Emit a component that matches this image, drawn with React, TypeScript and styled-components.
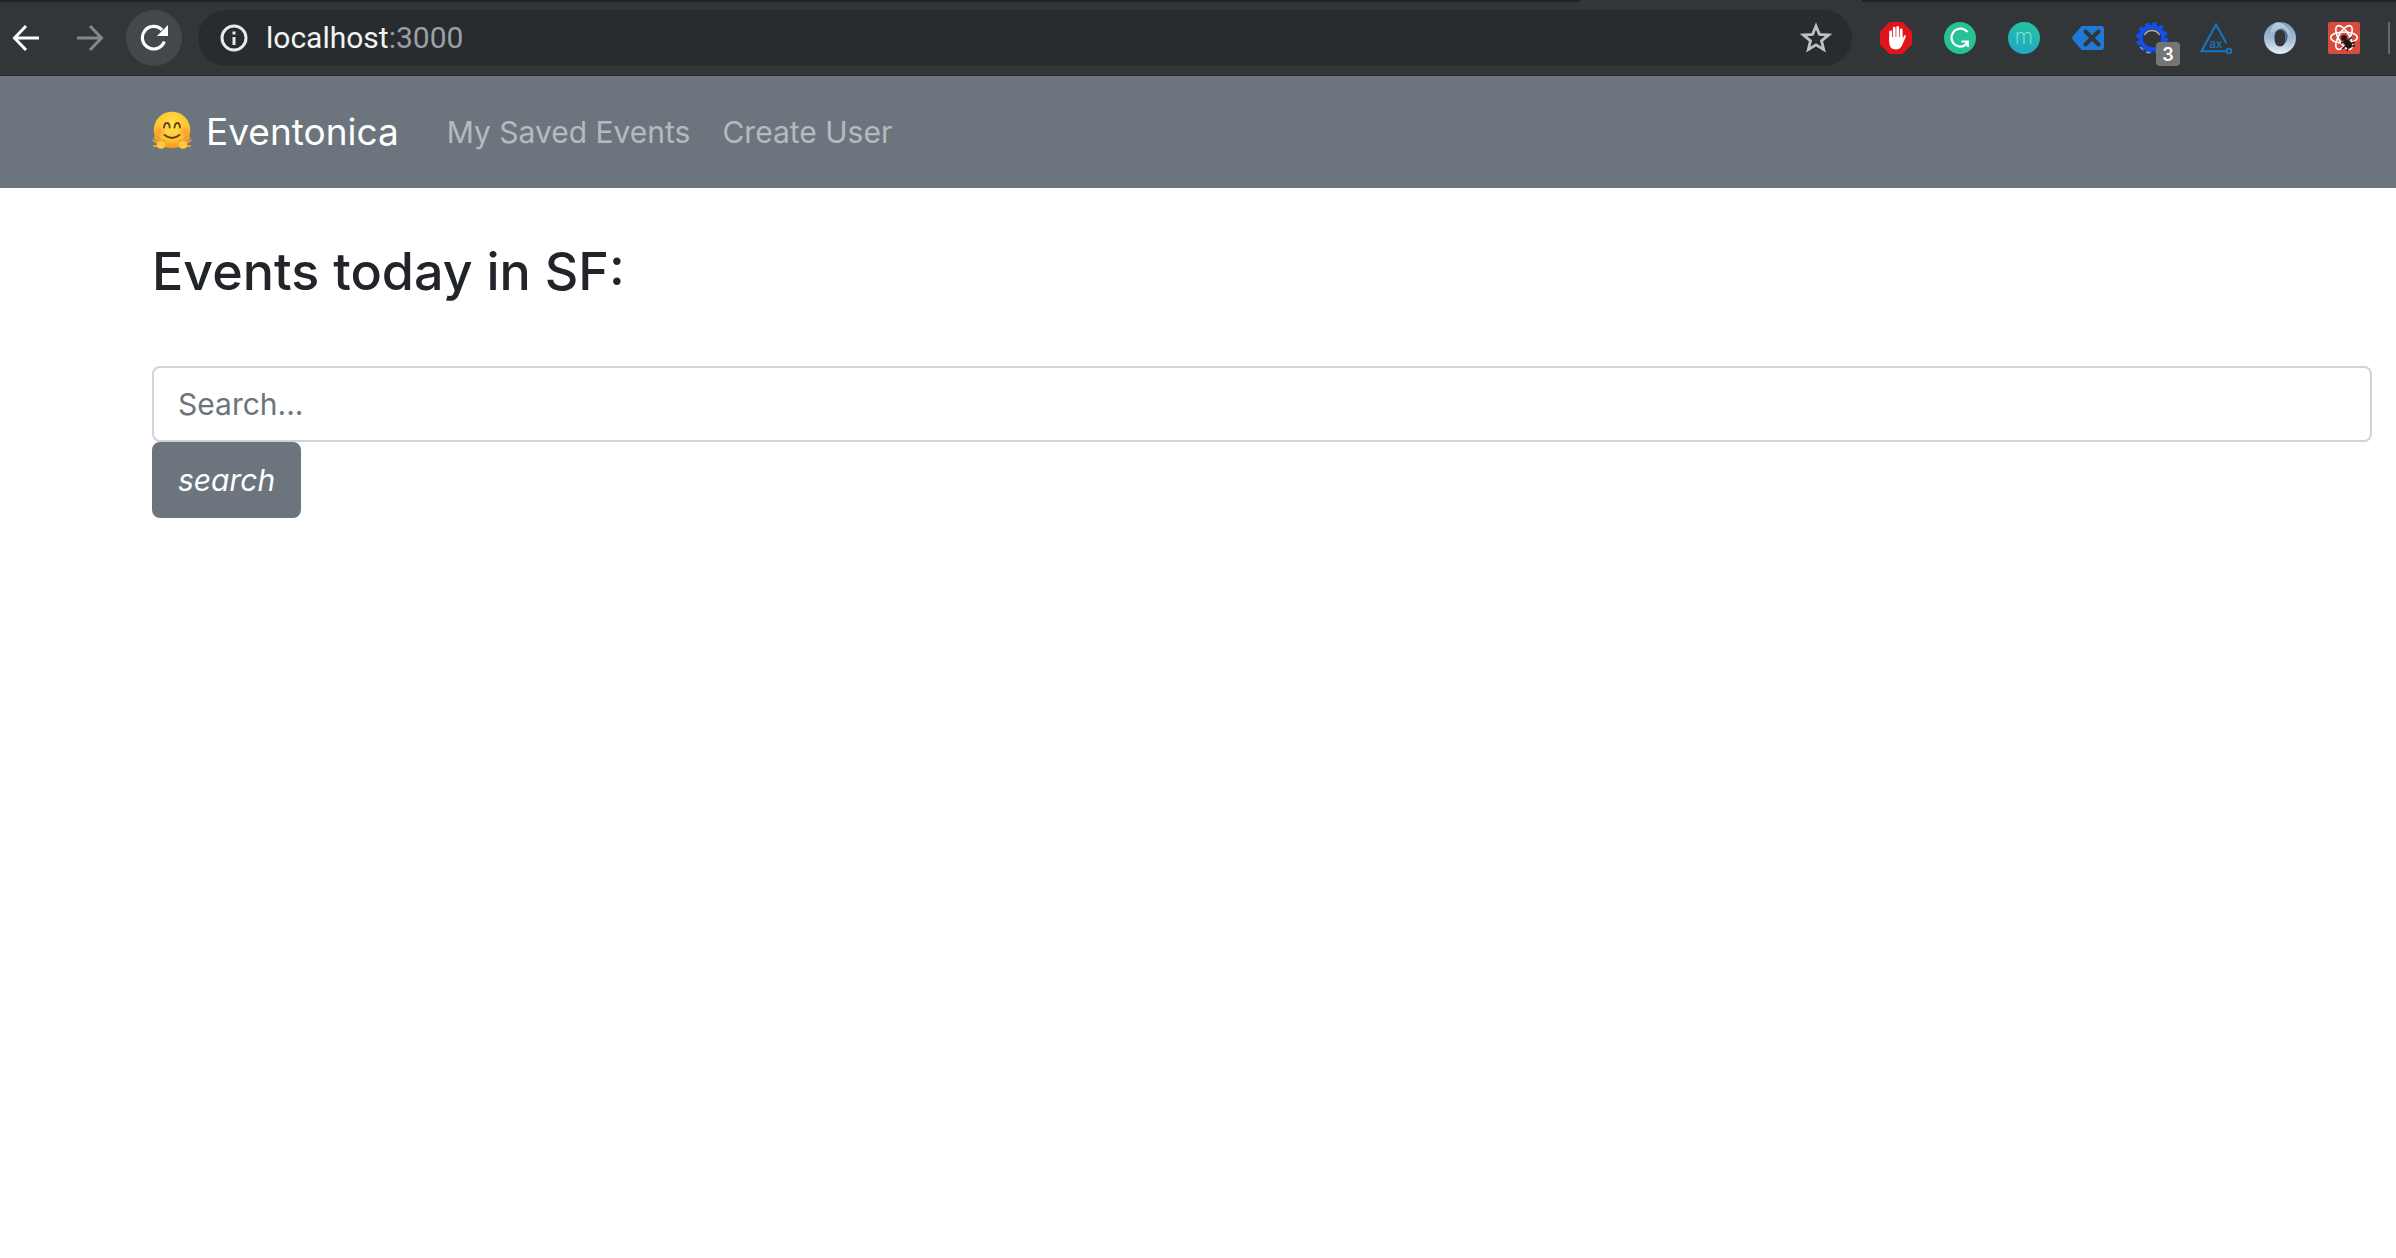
import React from "react";
import styled, { createGlobalStyle } from "styled-components";

const uiFont = `Inter, "Liberation Sans", Arial, sans-serif`;

const GlobalStyle = createGlobalStyle`
  *, *::before, *::after { box-sizing: border-box; }
  body {
    margin: 0;
    background: #fff;
    color: #212529;
    font-family: ${uiFont};
    font-size: 30px;
    line-height: 48px;
  }
`;

const TabStrip = styled.div`
  display: flex;
  justify-content: flex-end;
  height: 2px;
  padding-right: 534px;
  background: #202124;
`;

const ActiveTab = styled.div`
  width: 282px;
  background: #323639;
`;

const Toolbar = styled.header`
  display: flex;
  align-items: center;
  height: 74px;
  padding-bottom: 1px;
  background: #323639;
  border-bottom: 1px solid #26282b;
  overflow: hidden;
`;

const ToolButton = styled.button<{ $active?: boolean }>`
  display: flex;
  flex: none;
  align-items: center;
  justify-content: center;
  width: 56px;
  height: 56px;
  padding: 0;
  border: 0;
  border-radius: 50%;
  background: ${(p) => (p.$active ? "#45484b" : "transparent")};
`;

const NavControls = styled.div`
  display: flex;
  flex: none;
  gap: 8px;
  margin-left: -2px;
`;

const AddressBar = styled.div`
  display: flex;
  flex: 1;
  align-items: center;
  height: 56px;
  margin-left: 16px;
  padding: 0 20px 0 22px;
  border-radius: 28px;
  background: #282c2f;
`;

const Url = styled.div`
  flex: 1;
  margin-left: 18px;
  font-family: Roboto, "Liberation Sans", sans-serif;
  font-size: 30px;
  line-height: 40px;
  color: #9aa0a6;
`;

const Host = styled.span`
  color: #f1f3f4;
`;

const BarButton = styled.button`
  display: flex;
  padding: 0;
  border: 0;
  background: transparent;
`;

const Extensions = styled.div`
  display: flex;
  flex: none;
  align-items: center;
  gap: 32px;
  margin: 0 6px 0 28px;
`;

const ExtensionButton = styled(BarButton)`
  position: relative;
  width: 32px;
  height: 32px;
`;

const Badge = styled.span`
  position: absolute;
  left: 20px;
  top: 20px;
  width: 24px;
  height: 24px;
  border-radius: 4px;
  background: #757575;
  color: #fff;
  font-family: ${uiFont};
  font-size: 18px;
  font-weight: 600;
  line-height: 26px;
  text-align: center;
`;

const Divider = styled.span`
  width: 2px;
  height: 32px;
  margin-left: -4px;
  background: #65686b;
`;

const Navbar = styled.nav`
  display: flex;
  align-items: center;
  height: 112px;
  padding: 0 152px;
  background: #6c757d;
`;

const Brand = styled.a`
  display: flex;
  align-items: center;
  gap: 14px;
  margin-right: 48px;
  color: #fff;
  font-size: 37px;
  line-height: 60px;
  text-decoration: none;
`;

const BrandMark = styled.svg`
  flex: none;
  margin-bottom: 4px;
`;

const NavList = styled.ul`
  display: flex;
  gap: 32px;
  margin: 0;
  padding: 0;
  list-style: none;
`;

const NavLink = styled.a`
  color: rgba(255, 255, 255, 0.5);
  text-decoration: none;
`;

const Main = styled.main`
  padding: 50px 24px 48px 152px;
`;

const Title = styled.h3`
  margin: 0 0 60px;
  font-size: 52px;
  font-weight: 500;
  line-height: 68px;
`;

const SearchForm = styled.form`
  display: flex;
  flex-direction: column;
  align-items: flex-start;
`;

const SearchInput = styled.input`
  width: 100%;
  height: 76px;
  padding: 12px 24px;
  border: 2px solid #ced4da;
  border-radius: 8px;
  background: #fff;
  color: #495057;
  font: inherit;
  outline: none;
  &::placeholder { color: #6c757d; opacity: 1; }
`;

const SearchButton = styled.button`
  height: 76px;
  padding: 12px 24px;
  border: 2px solid #6c757d;
  border-radius: 8px;
  background: #6c757d;
  color: #fff;
  font: inherit;
  font-style: italic;
`;

const IconText = styled.text<{ $size: number; $weight: number }>`
  font-family: ${uiFont};
  font-size: ${(p) => p.$size}px;
  font-weight: ${(p) => p.$weight};
  text-anchor: middle;
`;

const BackIcon = () => (
  <svg width="28" height="28" viewBox="0 0 28 28" fill="none" stroke="#fff" strokeWidth="3">
    <path d="M27 14H3M14 2L2.500 14L14 26" />
  </svg>
);

const ForwardIcon = () => (
  <svg width="28" height="28" viewBox="0 0 28 28" fill="none" stroke="#85888a" strokeWidth="3">
    <path d="M1 14H25M14 2L25.500 14L14 26" />
  </svg>
);

const ReloadIcon = () => (
  <svg width="28" height="28" viewBox="0 0 28 28">
    <path d="M24.300 17.500A11.300 11.300 0 1 1 22 6" fill="none" stroke="#fff" strokeWidth="3.200" />
    <path d="M28 1V12H17Z" fill="#fff" />
  </svg>
);

const InfoIcon = () => (
  <svg width="28" height="28" viewBox="0 0 28 28">
    <circle cx="14" cy="14" r="12" fill="none" stroke="#e8eaed" strokeWidth="3" />
    <path d="M12.500 7.500h3v3h-3zM12.500 13h3v8h-3z" fill="#e8eaed" />
  </svg>
);

const StarIcon = () => (
  <svg width="32" height="32" viewBox="0 0 32 32">
    <path
      d="M16 4L19.400 12.300L28.500 13L21.500 18.800L23.700 27.600L16 22.900L8.300 27.600L10.500 18.800L3.500 13L12.600 12.300Z"
      fill="none"
      stroke="#bdc1c6"
      strokeWidth="2.800"
    />
  </svg>
);

const AdBlockIcon = () => (
  <svg width="32" height="32" viewBox="0 0 32 32">
    <path d="M9.400 0H22.600L32 9.400V22.600L22.600 32H9.400L0 22.600V9.400Z" fill="#e1131b" />
    <g stroke="#fff" strokeWidth="2.800" strokeLinecap="round" fill="none">
      <path d="M10.600 18V9.800M14.200 16V6.200M17.700 16V5.500M21.200 17V8" />
    </g>
    <path d="M9.200 15H22.600V17L24.300 13.300Q26.500 12.800 25.700 15L22 23.500Q20 27.500 16 27.500Q9.200 27.500 9.200 20Z" fill="#fff" />
  </svg>
);

const GrammarIcon = () => (
  <svg width="32" height="32" viewBox="0 0 32 32">
    <circle cx="16" cy="16" r="16" fill="#26c297" />
    <path d="M23.500 10A9 9 0 1 0 21.500 23L24 19.500M17.500 19.500H24V25" fill="none" stroke="#fff" strokeWidth="2.200" />
  </svg>
);

const MIcon = () => (
  <svg width="32" height="32" viewBox="0 0 32 32">
    <defs>
      <linearGradient id="mGradient" x1="0.700" y1="0" x2="0.300" y2="1">
        <stop offset="0" stopColor="#24c69c" />
        <stop offset="1" stopColor="#22a3c9" />
      </linearGradient>
    </defs>
    <circle cx="16" cy="16" r="16" fill="url(#mGradient)" />
    <IconText x="16" y="22" fill="#8ae4da" $size={21} $weight={200}>m</IconText>
  </svg>
);

const ClearIcon = () => (
  <svg width="32" height="32" viewBox="0 0 32 32">
    <path d="M11 4H29Q32 4 32 7V25Q32 28 29 28H11Q9.500 28 8.500 26.800L1 18Q-.8 16 1 14L8.500 5.200Q9.500 4 11 4Z" fill="#2079d6" />
    <path d="M13.500 9.500L26.500 22.500M26.500 9.500L13.500 22.500" stroke="#323639" strokeWidth="4" strokeLinecap="round" />
  </svg>
);

const GearIcon = () => (
  <svg width="32" height="32" viewBox="0 0 32 32" fill="none">
    <circle cx="16" cy="16" r="13.800" stroke="#1550ee" strokeWidth="4" strokeDasharray="4.200 3.025" />
    <circle cx="16" cy="16" r="11.300" stroke="#1550ee" strokeWidth="4" />
    <path d="M8.500 13A8.500 8.500 0 0 1 23.500 13" stroke="#b4b4b0" strokeWidth="1.500" />
    <path d="M4 25L7 27.500M10 30L14 31" stroke="#9a9da0" strokeWidth="1.500" />
  </svg>
);

const AxeIcon = () => (
  <svg width="32" height="32" viewBox="0 0 32 32" fill="none" stroke="#1577c4">
    <path d="M26.500 21.500L16 2.500L1.500 29.200H26" strokeWidth="2" />
    <circle cx="29" cy="29" r="2.300" strokeWidth="1.800" />
    <IconText x="16" y="25.500" fill="#1577c4" stroke="none" $size={12} $weight={500}>ax</IconText>
  </svg>
);

const RingIcon = () => (
  <svg width="32" height="32" viewBox="0 0 32 32">
    <defs>
      <linearGradient id="ringLeft" x1="0" y1="0" x2="0" y2="1">
        <stop offset="0" stopColor="#7f9fbd" />
        <stop offset="0.500" stopColor="#9db9d2" />
        <stop offset="1" stopColor="#e6f0f8" />
      </linearGradient>
      <linearGradient id="ringRight" x1="0" y1="0" x2="0" y2="1">
        <stop offset="0" stopColor="#e6f0f8" />
        <stop offset="0.500" stopColor="#9db9d2" />
        <stop offset="1" stopColor="#54789d" />
      </linearGradient>
    </defs>
    <path
      fillRule="evenodd"
      d="M16 0A16 16 0 1 1 16 32A16 16 0 1 1 16 0ZM16 7.500C12.500 7.500 10.500 11 10.500 16S12.500 24.500 16 24.500S21.500 21 21.500 16S19.500 7.500 16 7.500Z"
      fill="url(#ringLeft)"
    />
    <path
      d="M12 .6A16 16 0 0 1 16 32Q22 30 25 25Q27 20 25 14Q22 7.500 16 7.500Q10 7.500 7 13Q6 5 12 .6Z"
      fill="url(#ringRight)"
      opacity="0.550"
    />
    <path d="M12 12Q13.500 7.500 16 7.500Q21.500 8.500 21.500 16Q21.500 20 20 22.500Q24 19 23.500 13Q21.500 6.500 16 6.500Q13 7.500 12 12Z" fill="#46698f" />
  </svg>
);

const ReactBugIcon = () => (
  <svg width="32" height="32" viewBox="0 0 32 32">
    <rect width="32" height="32" rx="2" fill="#da4b3d" />
    <g fill="none" stroke="#fff" strokeWidth="1.600">
      <ellipse cx="16" cy="15.500" rx="13.300" ry="5.500" />
      <ellipse cx="16" cy="15.500" rx="13.300" ry="5.500" transform="rotate(60 16 15.500)" />
      <ellipse cx="16" cy="15.500" rx="13.300" ry="5.500" transform="rotate(120 16 15.500)" />
    </g>
    <circle cx="16" cy="16" r="3" fill="#221615" />
    <ellipse cx="20" cy="22" rx="3.500" ry="5" transform="rotate(-35 20 22)" fill="#221615" />
    <path d="M13 21L18 20L24 15M14 27L19 23L27 20M19 29L21 24L27 24" fill="none" stroke="#221615" strokeWidth="1.500" />
  </svg>
);

const HugIcon = () => (
  <BrandMark width="40" height="40" viewBox="0 0 40 40" role="img" aria-label="Hugging face">
    <defs>
      <radialGradient id="face" cx="0.500" cy="0.350" r="0.700">
        <stop offset="0" stopColor="#ffe250" />
        <stop offset="0.600" stopColor="#fdc62f" />
        <stop offset="1" stopColor="#f0881c" />
      </radialGradient>
      <radialGradient id="cheek">
        <stop offset="0" stopColor="#fb8a3c" stopOpacity="0.700" />
        <stop offset="1" stopColor="#fb8a3c" stopOpacity="0" />
      </radialGradient>
    </defs>
    <circle cx="20" cy="20" r="18.300" fill="url(#face)" />
    <circle cx="7.500" cy="22" r="6" fill="url(#cheek)" />
    <circle cx="32.500" cy="22" r="6" fill="url(#cheek)" />
    <path d="M12 17.500Q12.500 13 15 13T17.700 17.500M22.500 17.500Q23 13 25.300 13T28 17.500" fill="none" stroke="#714111" strokeWidth="1.900" strokeLinecap="round" />
    <path d="M12.500 25Q20 31 27.500 25" fill="none" stroke="#6b3c14" strokeWidth="1.800" strokeLinecap="round" />
    <g fill="none" stroke="#f0a02c" strokeWidth="2" strokeLinecap="round">
      <path d="M7 34L1.500 30.500M8 33L2.500 27.500M9 33L6 26.500M7 36L2 36M11 34L12 30" />
      <path d="M33 34L38.500 30.500M32 33L37.500 27.500M31 33L34 26.500M33 36L38 36M29 34L28 30" />
    </g>
    <ellipse cx="9" cy="35" rx="4.300" ry="3.800" fill="#ffc83d" />
    <ellipse cx="31" cy="35" rx="4.300" ry="3.800" fill="#ffc83d" />
  </BrandMark>
);

const extensions = [
  { name: "Ad blocker", Icon: AdBlockIcon },
  { name: "Grammar checker", Icon: GrammarIcon },
  { name: "Momentum", Icon: MIcon },
  { name: "Clear cache", Icon: ClearIcon },
  { name: "Settings", Icon: GearIcon, count: 3 },
  { name: "Accessibility", Icon: AxeIcon },
  { name: "JSON viewer", Icon: RingIcon },
  { name: "React tools", Icon: ReactBugIcon },
];

export default function App() {
  return (
    <>
      <GlobalStyle />
      <TabStrip>
        <ActiveTab />
      </TabStrip>
      <Toolbar>
        <NavControls>
          <ToolButton aria-label="Back"><BackIcon /></ToolButton>
          <ToolButton aria-label="Forward"><ForwardIcon /></ToolButton>
          <ToolButton aria-label="Reload" $active><ReloadIcon /></ToolButton>
        </NavControls>
        <AddressBar>
          <BarButton aria-label="Site information"><InfoIcon /></BarButton>
          <Url><Host>localhost</Host>:3000</Url>
          <BarButton aria-label="Bookmark"><StarIcon /></BarButton>
        </AddressBar>
        <Extensions>
          {extensions.map(({ name, Icon, count }) => (
            <ExtensionButton key={name} aria-label={name}>
              <Icon />
              {count && <Badge>{count}</Badge>}
            </ExtensionButton>
          ))}
          <Divider />
        </Extensions>
      </Toolbar>
      <Navbar>
        <Brand href="#"><HugIcon />Eventonica</Brand>
        <NavList>
          <li><NavLink href="#saved">My Saved Events</NavLink></li>
          <li><NavLink href="#create">Create User</NavLink></li>
        </NavList>
      </Navbar>
      <Main>
        <Title>Events today in SF:</Title>
        <SearchForm onSubmit={(e) => e.preventDefault()}>
          <SearchInput type="search" aria-label="Search events" placeholder="Search..." />
          <SearchButton type="submit">search</SearchButton>
        </SearchForm>
      </Main>
    </>
  );
}
